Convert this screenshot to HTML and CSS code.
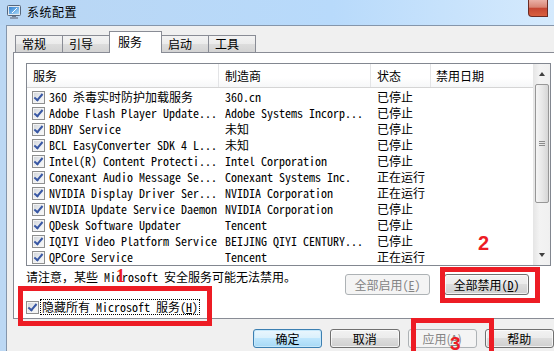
FILE: index.html
```html
<!DOCTYPE html>
<html lang="zh-CN">
<head>
  <meta charset="UTF-8" />
  <title>系统配置</title>
  <link rel="stylesheet" href="styles.css">
</head>
<body>
  <div class="titlebar">
    <svg class="app-icon" width="14" height="14" viewBox="0 0 14 14">
      <defs>
        <linearGradient id="scr" x1="0" y1="0" x2="1" y2="1">
          <stop offset="0" stop-color="#2f7fd0" />
          <stop offset="1" stop-color="#a9d8f7" />
        </linearGradient>
      </defs>
      <rect x="0.5" y="0.5" width="13" height="10" rx="1" fill="#e3e9f0" stroke="#56677c" />
      <rect x="2" y="2" width="10" height="7" fill="url(#scr)" />
      <path d="M5 8 L10 3" stroke="#ffffff" stroke-width="1" />
      <rect x="5" y="11" width="4" height="1" fill="#6d7d91" />
      <rect x="3" y="12" width="8" height="2" fill="#8a9ab0" />
    </svg>
    <span class="title">系统配置</span>
    <div class="close"></div>
  </div>

  <div class="client">
    <div class="tabs">
      <div class="tab">常规</div>
      <div class="tab">引导</div>
      <div class="tab active">服务</div>
      <div class="tab">启动</div>
      <div class="tab">工具</div>
    </div>

    <div class="panel">
      <div class="list">
        <div class="list-main">
          <div class="list-head">
            <div class="c1">服务</div>
            <div class="c2">制造商</div>
            <div class="c3">状态</div>
            <div class="c4">禁用日期</div>
          </div>
          <div class="rows">
            <div class="row"><div class="c1"><span class="cb"></span>360 杀毒实时防护加载服务</div><div class="c2">360.cn</div><div class="c3">已停止</div></div>
            <div class="row"><div class="c1"><span class="cb"></span>Adobe Flash Player Update...</div><div class="c2">Adobe Systems Incorp...</div><div class="c3">已停止</div></div>
            <div class="row"><div class="c1"><span class="cb"></span>BDHY Service</div><div class="c2">未知</div><div class="c3">已停止</div></div>
            <div class="row"><div class="c1"><span class="cb"></span>BCL EasyConverter SDK 4 L...</div><div class="c2">未知</div><div class="c3">已停止</div></div>
            <div class="row"><div class="c1"><span class="cb"></span>Intel(R) Content Protecti...</div><div class="c2">Intel Corporation</div><div class="c3">已停止</div></div>
            <div class="row"><div class="c1"><span class="cb"></span>Conexant Audio Message Se...</div><div class="c2">Conexant Systems Inc.</div><div class="c3">正在运行</div></div>
            <div class="row"><div class="c1"><span class="cb"></span>NVIDIA Display Driver Ser...</div><div class="c2">NVIDIA Corporation</div><div class="c3">正在运行</div></div>
            <div class="row"><div class="c1"><span class="cb"></span>NVIDIA Update Service Daemon</div><div class="c2">NVIDIA Corporation</div><div class="c3">已停止</div></div>
            <div class="row"><div class="c1"><span class="cb"></span>QDesk Software Updater</div><div class="c2">Tencent</div><div class="c3">已停止</div></div>
            <div class="row"><div class="c1"><span class="cb"></span>IQIYI Video Platform Service</div><div class="c2">BEIJING QIYI CENTURY...</div><div class="c3">已停止</div></div>
            <div class="row"><div class="c1"><span class="cb"></span>QPCore Service</div><div class="c2">Tencent</div><div class="c3">正在运行</div></div>
            <div class="row"><div class="c1"><span class="cb"></span>QQLiveService</div><div class="c2">Tencent</div><div class="c3">已停止</div></div>
          </div>
        </div>
        <div class="scroll">
          <div class="sb-btn"><span class="arrow-up"></span></div>
          <div class="thumb"><span class="grip"></span></div>
          <div class="sb-space"></div>
          <div class="sb-btn"><span class="arrow-down"></span></div>
        </div>
      </div>

      <div class="actions">
        <div class="note mono">请注意，某些 Microsoft 安全服务可能无法禁用。</div>
        <div class="btn wide disabled mono">全部启用(<u>E</u>)</div>
        <div class="btn wide mono">全部禁用(<u>D</u>)</div>
      </div>

      <div class="hide-row">
        <span class="cb"></span>
        <span class="hide-label mono">隐藏所有 Microsoft 服务(<u>H</u>)</span>
      </div>
    </div>

    <div class="footer">
      <div class="btn default">确定</div>
      <div class="btn">取消</div>
      <div class="btn disabled">应用(<u>A</u>)</div>
      <div class="btn">帮助</div>
    </div>
  </div>

  <!-- red annotations drawn on top of the screenshot -->
  <div class="mark box1"></div>
  <div class="mark box2"></div>
  <div class="mark box3"></div>
  <span class="num n1">1</span>
  <span class="num n2">2</span>
  <span class="num n3">3</span>
</body>
</html>
```

FILE: styles.css
```css
body {
  margin: 0;
  width: 554px;
  height: 351px;
  overflow: hidden;
  position: relative;
  background: linear-gradient(to right, #bcd8f4, #c4ddf5);
  font-family: "Noto Sans CJK SC", sans-serif;
  font-size: 12px;
  color: #000;
}

.mono {
  font-family: "Noto Sans Mono CJK SC", "Liberation Mono", "Noto Sans CJK SC", monospace;
}

/* title bar */
.titlebar {
  display: flex;
  align-items: flex-start;
  height: 25px;
  padding-left: 7px;
  background: linear-gradient(to right, #b9d6f3, #b8dafb 60%, #d5eafd);
}

.app-icon {
  margin-top: 5px;
}

.title {
  margin: 4px 0 0 6px;
  line-height: 16px;
  letter-spacing: 0.5px;
}

.close {
  margin-left: auto;
  margin-right: 6px;
  width: 18px;
  height: 16px;
  border: 1px solid #6b2b24;
  border-top: none;
  border-radius: 0 0 0 4px;
  background: linear-gradient(#eab0a6, #d88474 45%, #c54632 52%, #d8603f);
}

/* client area */
.client {
  margin-left: 6px;
  height: 325px;
  border-left: 1px solid #8596ab;
  border-top: 1px solid #8596ab;
  background: #f0f0f0;
}

.tabs {
  display: flex;
  align-items: flex-end;
  height: 21px;
  padding: 5px 0 0 8px;
}

.tab {
  box-sizing: border-box;
  width: 48px;
  height: 17px;
  margin-right: -1px;
  padding-left: 6px;
  border: 1px solid #898c95;
  border-bottom: none;
  background: linear-gradient(#f3f3f3, #ebebeb 50%, #dddddd 50%, #d3d3d3);
  line-height: 16px;
}

.tab.active {
  position: relative;
  z-index: 1;
  width: 53px;
  height: 22px;
  margin-bottom: -1px;
  padding-left: 8px;
  background: #fff;
  line-height: 20px;
}

.panel {
  box-sizing: border-box;
  width: 560px;
  height: 267px;
  margin-left: 6px;
  padding: 10px 0 0 12px;
  border: 1px solid #898c95;
  background: #fff;
}

/* services list */
.list {
  box-sizing: border-box;
  display: flex;
  width: 525px;
  height: 203px;
  border: 1px solid #828790;
}

.list-main {
  width: 506px;
  overflow: hidden;
}

.list-head,
.row {
  display: grid;
  grid-template-columns: 192px 152px 60px 102px;
}

.list-head {
  height: 23px;
  border-bottom: 1px solid #d5d5d5;
  background: linear-gradient(#ffffff, #ffffff 60%, #f6f7f8);
  line-height: 23px;
}

.list-head > div {
  padding-left: 6px;
  border-right: 1px solid #e3e4e6;
}

.list-head .c4 {
  padding-left: 5px;
  border-right: none;
}

.rows {
  padding-top: 1px;
  font-family: "Noto Sans Mono CJK SC", "Liberation Mono", "Noto Sans CJK SC", monospace;
}

.row {
  height: 16px;
  line-height: 16px;
  white-space: nowrap;
}

.row > div {
  overflow: hidden;
}

.row .c1 {
  display: flex;
  align-items: center;
  gap: 4px;
  padding-left: 5px;
}

.row .c2,
.row .c3 {
  padding-left: 6px;
}

/* checkbox */
.cb {
  position: relative;
  box-sizing: border-box;
  flex: none;
  display: inline-block;
  width: 13px;
  height: 13px;
  border: 1px solid #8e8f8f;
  background: linear-gradient(135deg, #cdd1d7, #eef0f2 60%, #f8f8f8);
  box-shadow: inset 0 0 0 1px #f4f4f4;
}

.cb::after {
  content: "";
  position: absolute;
  left: 3px;
  top: 0px;
  width: 3px;
  height: 7px;
  border-right: 2px solid #3857a4;
  border-bottom: 2px solid #3857a4;
  transform: rotate(40deg);
}

/* scrollbar */
.scroll {
  display: flex;
  flex-direction: column;
  width: 17px;
  background: linear-gradient(to right, #e5e5e5, #f3f3f3 40%, #f0f0f0);
}

.sb-btn {
  display: flex;
  align-items: center;
  justify-content: center;
  height: 20px;
}

.arrow-up,
.arrow-down {
  width: 0;
  height: 0;
  border-left: 3px solid transparent;
  border-right: 3px solid transparent;
}

.arrow-up {
  border-bottom: 4px solid #404040;
}

.arrow-down {
  border-top: 4px solid #404040;
}

.thumb {
  display: flex;
  align-items: center;
  justify-content: center;
  box-sizing: border-box;
  height: 119px;
  margin: 0 1px 0 2px;
  border: 1px solid #979797;
  border-radius: 2px;
  background: linear-gradient(to right, #f5f5f5, #e8e8e8 50%, #d6d6d6);
}

.grip {
  width: 6px;
  height: 5px;
  background: repeating-linear-gradient(#8b8b8b 0 1px, transparent 1px 2px);
}

.sb-space {
  flex: 1;
}

/* under the list */
.actions {
  display: flex;
  align-items: flex-start;
  margin-top: 3px;
}

.note {
  width: 319px;
  line-height: 16px;
  white-space: nowrap;
}

.btn {
  box-sizing: border-box;
  display: flex;
  align-items: center;
  justify-content: center;
  width: 73px;
  height: 19px;
  border: 1px solid #707070;
  border-radius: 3px;
  background: linear-gradient(#f2f2f2, #ebebeb 50%, #dddddd 50%, #cfcfcf);
  box-shadow: inset 0 0 0 1px rgba(255, 255, 255, 0.7);
  line-height: 16px;
  white-space: nowrap;
}

.btn u {
  text-decoration: underline;
}

.btn.wide {
  width: 85px;
  height: 21px;
  margin-top: 5px;
  margin-right: 14px;
}

.btn.default {
  border-color: #3c7fb1;
  background: linear-gradient(#eaf6fd, #d9f0fc 50%, #bee6fd 50%, #a7d9f5);
  box-shadow: inset 0 0 0 1px #c6e8fb;
}

.btn.disabled {
  border-color: #adb2b5;
  background: #f4f4f4;
  box-shadow: none;
  color: #838383;
}

.hide-row {
  display: flex;
  align-items: center;
  height: 16px;
  margin-top: 4px;
}

.hide-label {
  box-sizing: border-box;
  height: 16px;
  margin-left: 1px;
  padding: 0 1px;
  border: 1px dotted #000;
  line-height: 14px;
  white-space: nowrap;
}

.footer {
  display: flex;
  gap: 8px;
  margin-top: 10px;
  padding-left: 246px;
}

/* annotations */
.mark {
  position: absolute;
  box-sizing: border-box;
  border: 5px solid #ed1c24;
}

.box1 {
  left: 18px;
  top: 286px;
  width: 194px;
  height: 40px;
}

.box2 {
  left: 440px;
  top: 267px;
  width: 100px;
  height: 36px;
}

.box3 {
  left: 411px;
  top: 318px;
  width: 83px;
  height: 40px;
}

.num {
  position: absolute;
  color: #ed1c24;
  font-weight: bold;
  line-height: 1;
}

.n1 {
  left: 116px;
  top: 267px;
  font-family: "Liberation Serif", serif;
  font-size: 18px;
}

.n2 {
  left: 478px;
  top: 233px;
  font-family: "Liberation Sans", sans-serif;
  font-size: 20px;
}

.n3 {
  left: 450px;
  top: 334px;
  font-family: "Liberation Sans", sans-serif;
  font-size: 19px;
}
```
